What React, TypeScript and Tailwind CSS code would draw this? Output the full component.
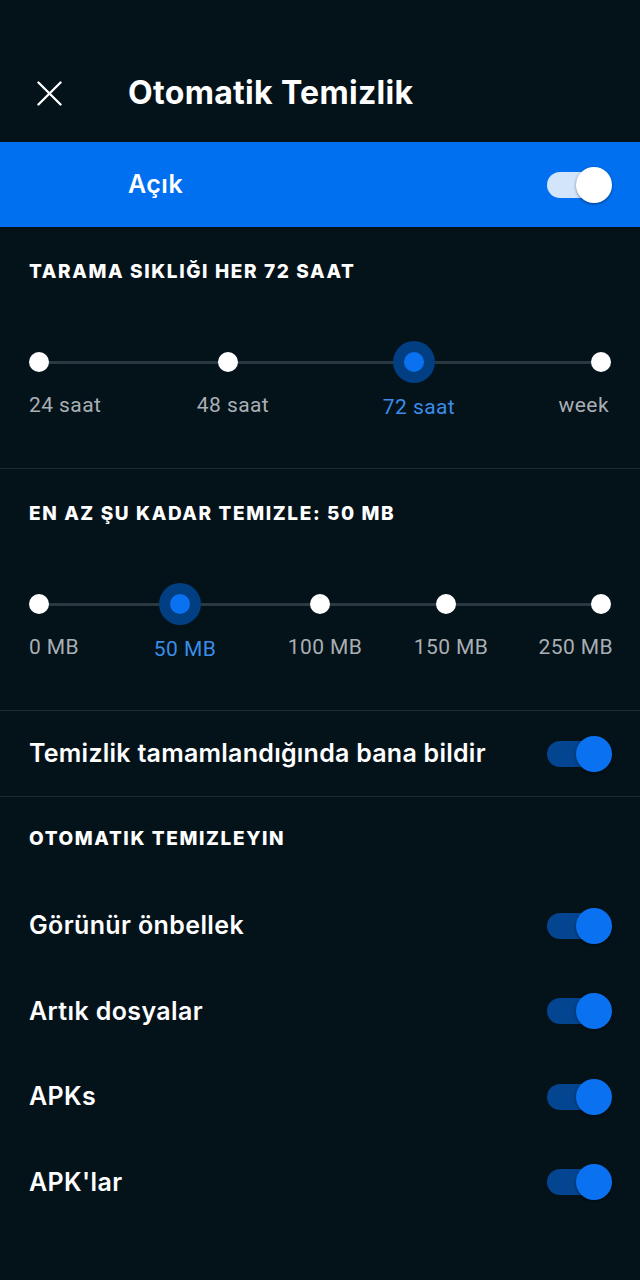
import React from 'react';

type Stop = { label: string; x: number };

const freq: Stop[] = [
  { label: '24 saat', x: 39 },
  { label: '48 saat', x: 228 },
  { label: '72 saat', x: 414 },
  { label: 'week', x: 601 },
];

const sizes: Stop[] = [
  { label: '0 MB', x: 39 },
  { label: '50 MB', x: 180 },
  { label: '100 MB', x: 320 },
  { label: '150 MB', x: 446 },
  { label: '250 MB', x: 601 },
];

const cleanItems = ['Görünür önbellek', 'Artık dosyalar', 'APKs', "APK'lar"];

function Toggle({ light = false }: { light?: boolean }) {
  return (
    <div className="relative w-[65px] h-[36px] flex items-center">
      <div className={`w-[48px] h-[26px] rounded-full ${light ? 'bg-[#d3e5fb]' : 'bg-[#034590]'}`} />
      <div
        className={`absolute right-0 top-0 w-[36px] h-[36px] rounded-full shadow-[0_1px_3px_rgba(0,0,0,0.45)] ${
          light ? 'bg-white' : 'bg-[#0a72f0]'
        }`}
      />
    </div>
  );
}

function Slider({
  stops,
  active,
  title,
  lastRight,
}: {
  stops: Stop[];
  active: number;
  title: string;
  lastRight: 'right-[31px]' | 'right-[27px]';
}) {
  return (
    <section className="h-[242px] border-b border-[#1d2a33] pt-[34px]">
      <h2 className="px-[29px] text-[19px] leading-[22px] font-extrabold tracking-[0.085em] text-white">{title}</h2>
      <div className="relative mt-[58px] h-[42px]">
        <div className="absolute left-[39px] right-[39px] top-[20px] h-[3px] bg-[#2a3841]" />
        {stops.map((s, i) => (
          <div
            key={s.label}
            className="absolute top-[21px] -translate-x-1/2 -translate-y-1/2"
            style={{ left: s.x }}
          >
            {i === active ? (
              <div className="w-[42px] h-[42px] rounded-full bg-[#023e82] flex items-center justify-center">
                <div className="w-[20px] h-[20px] rounded-full bg-[#0a72f0]" />
              </div>
            ) : (
              <div className="w-[20px] h-[20px] rounded-full bg-white" />
            )}
          </div>
        ))}
      </div>
      <div className="relative mt-[10px] h-[24px] font-['Roboto',sans-serif] text-[21px] leading-[24px] tracking-[0.02em]">
        {stops.map((s, i) => {
          const first = i === 0;
          const last = i === stops.length - 1;
          const color = i === active ? 'text-[#3a8de8]' : 'text-[#a9afb3]';
          if (first) return <span key={s.label} className={`absolute left-[29px] top-0 ${color}`}>{s.label}</span>;
          if (last) return <span key={s.label} className={`absolute ${lastRight} top-0 ${color}`}>{s.label}</span>;
          return (
            <span
              key={s.label}
              className={`absolute top-0 -translate-x-1/2 whitespace-nowrap ${color} ${i === active ? 'mt-[2px]' : ''}`}
              style={{ left: s.x + 5 }}
            >
              {s.label}
            </span>
          );
        })}
      </div>
    </section>
  );
}

export default function App() {
  return (
    <div className="w-[640px] min-h-[1280px] bg-[#04121a] text-white font-['Inter',sans-serif]">
      <header className="h-[142px] pt-[44px] flex items-center">
        <svg className="ml-[37px] w-[25px] h-[25px]" viewBox="0 0 26 26" fill="none">
          <path d="M1.5 1.5L24.5 24.5M24.5 1.5L1.5 24.5" stroke="white" strokeWidth="2.4" strokeLinecap="round" />
        </svg>
        <h1 className="ml-[66px] text-[32px] font-bold tracking-[0.01em]">Otomatik Temizlik</h1>
      </header>

      <div className="h-[85px] bg-[#0070f0] flex items-center justify-between pl-[128px] pr-[28px]">
        <span className="text-[25px] font-semibold tracking-[0.02em]">Açık</span>
        <Toggle light />
      </div>

      <Slider title="TARAMA SIKLIĞI HER 72 SAAT" stops={freq} active={2} lastRight="right-[31px]" />
      <Slider title="EN AZ ŞU KADAR TEMIZLE: 50 MB" stops={sizes} active={1} lastRight="right-[27px]" />

      <div className="h-[86px] border-b border-[#1d2a33] flex items-center justify-between pl-[29px] pr-[28px]">
        <span className="text-[25px] font-semibold tracking-[0.01em]">Temizlik tamamlandığında bana bildir</span>
        <Toggle />
      </div>

      <h2 className="pt-[31px] px-[29px] text-[19px] leading-[22px] font-extrabold tracking-[0.085em]">OTOMATIK TEMIZLEYIN</h2>

      <div className="mt-[33px] flex flex-col">
        {cleanItems.map((item) => (
          <div key={item} className="h-[85.5px] flex items-center justify-between pl-[29px] pr-[28px]">
            <span className="text-[25px] font-semibold tracking-[0.015em]">{item}</span>
            <Toggle />
          </div>
        ))}
      </div>
    </div>
  );
}
